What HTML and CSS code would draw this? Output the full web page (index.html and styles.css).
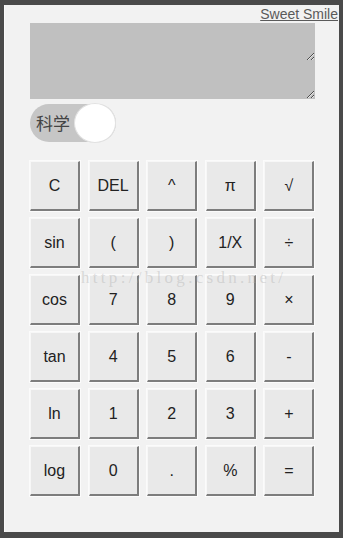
FILE: index.html
```html
<!DOCTYPE html>
<html lang="zh">
<head>
<meta charset="utf-8">
<title>Calculator</title>
<link rel="stylesheet" href="styles.css">
</head>
<body>
<div class="frame">
  <div class="top"><a class="brand" href="#">Sweet Smile</a></div>
  <div class="screen">
    <textarea class="display"></textarea>
    <textarea class="display"></textarea>
  </div>
  <div class="toggle">
    <span class="toggle-label">科学</span>
    <span class="knob"></span>
  </div>
  <div class="keys">
    <button class="key">C</button>
    <button class="key">DEL</button>
    <button class="key">^</button>
    <button class="key">π</button>
    <button class="key">√</button>
    <button class="key">sin</button>
    <button class="key">(</button>
    <button class="key">)</button>
    <button class="key">1/X</button>
    <button class="key">÷</button>
    <button class="key">cos</button>
    <button class="key">7</button>
    <button class="key">8</button>
    <button class="key">9</button>
    <button class="key">×</button>
    <button class="key">tan</button>
    <button class="key">4</button>
    <button class="key">5</button>
    <button class="key">6</button>
    <button class="key">-</button>
    <button class="key">ln</button>
    <button class="key">1</button>
    <button class="key">2</button>
    <button class="key">3</button>
    <button class="key">+</button>
    <button class="key">log</button>
    <button class="key">0</button>
    <button class="key">.</button>
    <button class="key">%</button>
    <button class="key">=</button>
  </div>
  <div class="watermark">http://blog.csdn.net/</div>
</div>
</body>
</html>
```
FILE: styles.css
```css
html, body {
  margin: 0;
  padding: 0;
  background: #4a4a4a;
  height: 538px;
  overflow: hidden;
}
body {
  padding: 5px 4px 6px 4px;
  box-sizing: border-box;
  font-family: "Liberation Sans", Arial, "Noto Sans CJK SC", sans-serif;
}
.frame {
  position: relative;
  background: #f2f2f2;
  height: 527px;
  border-left: 1px solid #fafafa;
  box-sizing: border-box;
}
.top {
  height: 18px;
  display: flex;
  justify-content: flex-end;
  padding-right: 1px;
}
.brand {
  font-size: 14px;
  line-height: 18px;
  color: #5a5a5a;
  text-decoration: underline;
}
.screen {
  margin-left: 25px;
  width: 285px;
}
.display {
  display: block;
  width: 285px;
  height: 38px;
  margin: 0;
  padding: 0;
  border: none;
  background: #c0c0c0;
  outline: none;
}
.toggle {
  margin: 5px 0 0 25px;
  width: 86px;
  height: 38px;
  border-radius: 19px;
  background: #c6c6c6;
  display: flex;
  align-items: center;
  box-sizing: border-box;
}
.toggle-label {
  font-family: "Noto Sans CJK SC", sans-serif;
  font-size: 17px;
  color: #444;
  padding-left: 6px;
  line-height: 20px;
}
.knob {
  margin-left: auto;
  width: 42px;
  height: 40px;
  border-radius: 50%;
  background: #fff;
  border: 1px solid #e2e2e2;
  box-sizing: border-box;
}
.keys {
  margin: 19px 0 0 25px;
  display: grid;
  grid-template-columns: repeat(5, 50px);
  grid-auto-rows: 50px;
  column-gap: 8.6px;
  row-gap: 7px;
}
.key {
  margin: 0;
  padding: 0;
  background: #e9e9e9;
  border-style: solid;
  border-width: 1px 2px 2px 1px;
  border-color: #f7f7f7 #7d7d7d #7d7d7d #f7f7f7;
  box-shadow: 0 0 0 1px #fbfbfb;
  font-family: "Liberation Sans", Arial, sans-serif;
  font-size: 16px;
  color: #222;
  text-align: center;
}
.watermark {
  position: absolute;
  left: 76px;
  top: 263px;
  font-family: "Liberation Serif", serif;
  font-size: 17px;
  letter-spacing: 3.3px;
  color: rgba(175, 175, 175, 0.4);
  pointer-events: none;
}
```
